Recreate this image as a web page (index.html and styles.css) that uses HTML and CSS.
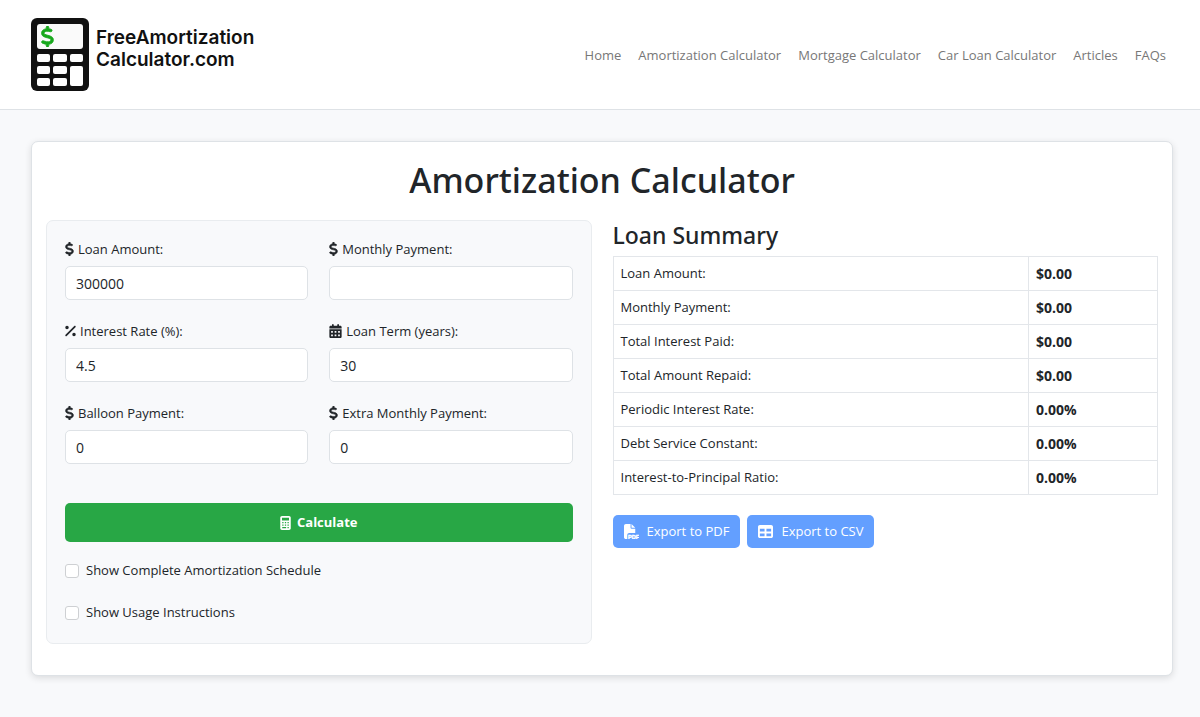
FILE: index.html
```html
<!DOCTYPE html>
<html lang="en">
<head>
  <meta charset="UTF-8" />
  <meta name="viewport" content="width=device-width, initial-scale=1.0" />
  <title>Amortization Calculator</title>
  <link rel="stylesheet" href="styles.css">
</head>
<body>
  <!-- Shared icon shapes -->
  <svg class="sprite" aria-hidden="true">
    <symbol id="dollar" viewBox="0 0 320 512">
      <path d="M160 0c17.700 0 32 14.300 32 32V67.700c1.600 .2 3.100 .4 4.700 .7c.4 .1 .7 .1 1.100 .2l48 8.800c17.400 3.200 28.900 19.900 25.700 37.200s-19.900 28.900-37.200 25.700l-47.500-8.700c-31.300-4.600-58.900-1.500-78.300 6.200s-27.200 18.300-29 28.100c-2 10.700-.5 16.700 1.200 20.400c1.800 3.900 5.500 8.300 12.800 13.200c16.300 10.700 41.300 17.700 73.700 26.300l2.900 .8c28.600 7.600 63.600 16.800 89.600 33.800c14.200 9.300 27.600 21.900 35.900 39.500c8.500 17.900 10.300 37.900 6.400 59.200c-6.900 38-33.100 63.400-65.600 76.700c-13.700 5.600-28.600 9.200-44.400 11V480c0 17.700-14.300 32-32 32s-32-14.300-32-32V445.100c-.4-.1-.9-.1-1.300-.2l-.2 0c-24.400-3.800-64.500-14.300-91.500-26.300c-16.100-7.200-23.400-26.100-16.200-42.200s26.100-23.400 42.200-16.200c20.900 9.300 55.300 18.500 75.200 21.600c31.900 4.700 58.200 2 76-5.300c16.900-6.900 24.600-16.900 26.800-28.900c1.900-10.600 .4-16.700-1.300-20.400c-1.900-4-5.600-8.400-13-13.300c-16.400-10.700-41.500-17.700-74-26.300l-2.800-.7C119.400 279.300 84.400 270 58.400 253c-14.200-9.300-27.500-22-35.800-39.600c-8.400-17.900-10.100-37.900-6.100-59.200C23.700 116 52.300 91.200 84.800 78.300c13.300-5.300 27.900-8.900 43.200-11V32c0-17.700 14.300-32 32-32z"/>
    </symbol>
    <symbol id="percent" viewBox="0 0 384 512">
      <path d="M374.600 118.600c12.500-12.500 12.500-32.800 0-45.300s-32.800-12.500-45.300 0l-320 320c-12.500 12.500-12.500 32.800 0 45.300s32.800 12.500 45.300 0l320-320zM128 128A64 64 0 1 0 0 128a64 64 0 1 0 128 0zM384 384a64 64 0 1 0-128 0a64 64 0 1 0 128 0z"/>
    </symbol>
    <symbol id="calendar" viewBox="0 0 448 512">
      <path fill-rule="evenodd" d="M128 0c17.700 0 32 14.300 32 32v32h128V32c0-17.700 14.300-32 32-32s32 14.300 32 32v32h48c26.500 0 48 21.500 48 48v48H0v-48c0-26.500 21.500-48 48-48h48V32c0-17.700 14.300-32 32-32zM0 192h448v272c0 26.500-21.500 48-48 48H48c-26.500 0-48-21.500-48-48V192zM64 256v64h64v-64zM192 256v64h64v-64zM320 256v64h64v-64zM64 384v64h64v-64zM192 384v64h64v-64zM320 384v64h64v-64z"/>
    </symbol>
    <symbol id="calculator" viewBox="0 0 384 512">
      <path fill-rule="evenodd" d="M64 0h256c35 0 64 29 64 64v384c0 35-29 64-64 64H64c-35 0-64-29-64-64V64C0 29 29 0 64 0zM64 64v96h256V64zM72 216v48h48v-48zM168 216v48h48v-48zM264 216v48h48v-48zM72 312v48h48v-48zM168 312v48h48v-48zM264 312v48h48v-48zM72 400v48h144v-48zM264 400v48h48v-48z"/>
    </symbol>
    <symbol id="pdf" viewBox="0 0 512 512">
      <path d="M0 64C0 28.700 28.700 0 64 0h160v128c0 17.700 14.300 32 32 32h128v144H176c-35.300 0-64 28.700-64 64v144H64c-35.300 0-64-28.700-64-64V64zM384 128H256V0z"/>
      <text x="136" y="500" font-family="Liberation Sans" font-size="190" font-weight="700" stroke="currentColor" stroke-width="14">PDF</text>
    </symbol>
    <symbol id="table" viewBox="0 0 512 512">
      <path fill-rule="evenodd" d="M64 32h384c35 0 64 29 64 64v320c0 35-29 64-64 64H64c-35 0-64-29-64-64V96c0-35 29-64 64-64zM64 160v96h160v-96zM288 160v96h160v-96zM64 320v96h160v-96zM288 320v96h160v-96z"/>
    </symbol>
  </svg>

  <header class="site-header">
    <a href="#" class="brand">
      <svg class="brand-icon" viewBox="0 0 58 73" aria-hidden="true">
        <rect width="58" height="73" rx="6" fill="#111"/>
        <rect x="6" y="6" width="46" height="25" rx="3" fill="#fafafa"/>
        <g fill="#fff">
          <rect x="6" y="36" width="13" height="8" rx="2"/>
          <rect x="22" y="36" width="14" height="8" rx="2"/>
          <rect x="39" y="36" width="13" height="8" rx="2"/>
          <rect x="6" y="48" width="13" height="8" rx="2"/>
          <rect x="22" y="48" width="14" height="8" rx="2"/>
          <rect x="39" y="48" width="13" height="20" rx="2"/>
          <rect x="6" y="60" width="13" height="8" rx="2"/>
          <rect x="22" y="60" width="14" height="8" rx="2"/>
        </g>
        <use href="#dollar" x="9" y="8" width="15" height="21" fill="#18a81d" stroke="#18a81d" stroke-width="20"/>
      </svg>
      <span>FreeAmortization<br>Calculator.com</span>
    </a>
    <nav class="main-nav">
      <a href="#">Home</a>
      <a href="#">Amortization Calculator</a>
      <a href="#">Mortgage Calculator</a>
      <a href="#">Car Loan Calculator</a>
      <a href="#">Articles</a>
      <a href="#">FAQs</a>
    </nav>
  </header>

  <main class="card">
    <h1>Amortization Calculator</h1>
    <div class="columns">
      <form class="panel">
        <div class="fields">
          <div class="field">
            <label for="loanAmount"><svg class="icon dollar"><use href="#dollar"/></svg>Loan Amount:</label>
            <input type="text" id="loanAmount" value="300000">
          </div>
          <div class="field">
            <label for="monthlyPayment"><svg class="icon dollar"><use href="#dollar"/></svg>Monthly Payment:</label>
            <input type="text" id="monthlyPayment">
          </div>
          <div class="field">
            <label for="interestRate"><svg class="icon percent"><use href="#percent"/></svg>Interest Rate (%):</label>
            <input type="text" id="interestRate" value="4.5">
          </div>
          <div class="field">
            <label for="loanTerm"><svg class="icon calendar"><use href="#calendar"/></svg>Loan Term (years):</label>
            <input type="text" id="loanTerm" value="30">
          </div>
          <div class="field">
            <label for="balloon"><svg class="icon dollar"><use href="#dollar"/></svg>Balloon Payment:</label>
            <input type="text" id="balloon" value="0">
          </div>
          <div class="field">
            <label for="extra"><svg class="icon dollar"><use href="#dollar"/></svg>Extra Monthly Payment:</label>
            <input type="text" id="extra" value="0">
          </div>
        </div>
        <button type="button" class="calculate"><svg class="icon calc"><use href="#calculator"/></svg>Calculate</button>
        <div class="check">
          <input type="checkbox" id="showSchedule">
          <label for="showSchedule">Show Complete Amortization Schedule</label>
        </div>
        <div class="check">
          <input type="checkbox" id="showUsage">
          <label for="showUsage">Show Usage Instructions</label>
        </div>
      </form>

      <section class="summary">
        <h2>Loan Summary</h2>
        <table>
          <tr><td>Loan Amount:</td><td class="value">$0.00</td></tr>
          <tr><td>Monthly Payment:</td><td class="value">$0.00</td></tr>
          <tr><td>Total Interest Paid:</td><td class="value">$0.00</td></tr>
          <tr><td>Total Amount Repaid:</td><td class="value">$0.00</td></tr>
          <tr><td>Periodic Interest Rate:</td><td class="value">0.00%</td></tr>
          <tr><td>Debt Service Constant:</td><td class="value">0.00%</td></tr>
          <tr><td>Interest-to-Principal Ratio:</td><td class="value">0.00%</td></tr>
        </table>
        <div class="exports">
          <button type="button"><svg class="icon export"><use href="#pdf"/></svg>Export to PDF</button>
          <button type="button"><svg class="icon export"><use href="#table"/></svg>Export to CSV</button>
        </div>
      </section>
    </div>
  </main>
</body>
</html>
```
FILE: styles.css
```css
:root {
  --text: #212529;
  --border: #dee2e6;
  --light: #f8f9fb;
  --green: #28a745;
  --blue: #639fff;
}
* { box-sizing: border-box; }
body {
  margin: 0;
  background: var(--light);
  color: var(--text);
  font-family: 'Segoe UI', 'Open Sans', 'Noto Sans', sans-serif;
  font-size: 13px;
  line-height: 21px;
}
h1, h2 {
  margin: 0;
  font-family: 'Segoe UI', 'Noto Sans', 'Open Sans', sans-serif;
  font-weight: 500;
}
button, input { font: inherit; color: inherit; }
.sprite { display: none; }
.icon {
  height: 14px;
  fill: currentColor;
  flex: none;
}
.dollar {
  width: 9px;
  stroke: currentColor;
  stroke-width: 20px;
}
.percent, .calc { width: 11px; }
.calendar { width: 13px; }
.export { width: 15px; height: 15px; }

/* Header */
.site-header {
  display: flex;
  align-items: center;
  justify-content: space-between;
  padding: 18px 34px 18px 31px;
  background: #fff;
  border-bottom: 1px solid var(--border);
}
.brand {
  display: flex;
  gap: 7px;
  color: #111;
  font: 600 19px/22px Inter, sans-serif;
  text-decoration: none;
}
.brand span { padding-top: 9px; }
.brand-icon { width: 58px; height: 73px; }
.main-nav {
  display: flex;
  gap: 17px;
  padding-top: 2px;
}
.main-nav a {
  color: #777;
  text-decoration: none;
}

/* Calculator card */
.card {
  margin: 31px 27px 42px 31px;
  padding: 16px 14px 31px;
  background: #fff;
  border: 1px solid var(--border);
  border-radius: 7px;
  box-shadow: 0 2px 7px rgba(0, 0, 0, 0.12);
}
h1 {
  margin-bottom: 18px;
  font-size: 34px;
  line-height: 44px;
  text-align: center;
}
.columns {
  display: grid;
  grid-template-columns: 1fr 1fr;
  gap: 21px;
}
.panel {
  padding: 18px 18px 20px;
  background: var(--light);
  border: 1px solid #e9ecef;
  border-radius: 7px;
}
.fields {
  display: grid;
  grid-template-columns: 1fr 1fr;
  gap: 21px;
  margin-bottom: 39px;
}
.field label {
  display: flex;
  align-items: center;
  gap: 4px;
  margin-bottom: 7px;
  line-height: 20px;
}
.field input {
  display: block;
  width: 100%;
  height: 34px;
  padding: 0 10px;
  background: #fff;
  border: 1px solid var(--border);
  border-radius: 5px;
  font-size: 14px;
}
.calculate {
  display: flex;
  align-items: center;
  justify-content: center;
  gap: 6px;
  width: 100%;
  height: 39px;
  margin-bottom: 18px;
  background: var(--green);
  border: 0;
  border-radius: 5px;
  color: #fff;
  font-weight: 700;
}
.check {
  display: flex;
  align-items: center;
  gap: 7px;
}
.check + .check { margin-top: 21px; }
.check input {
  appearance: none;
  width: 14px;
  height: 14px;
  margin: 0;
  background: #fff;
  border: 1px solid #ced0d3;
  border-radius: 3px;
}
.check input:checked { background: var(--blue); }

/* Summary */
h2 {
  margin-bottom: 5px;
  font-size: 23px;
  line-height: 31px;
}
table {
  width: 100%;
  border-collapse: collapse;
}
td {
  padding: 6px 7px;
  border: 1px solid #e3e6ea;
}
.value {
  width: 129px;
  font-size: 14px;
  font-weight: 700;
}
.exports {
  display: flex;
  gap: 7px;
  margin-top: 20px;
}
.exports button {
  display: flex;
  align-items: center;
  gap: 8px;
  height: 33px;
  padding: 0 11px;
  background: var(--blue);
  border: 0;
  border-radius: 5px;
  color: #fff;
}
```
